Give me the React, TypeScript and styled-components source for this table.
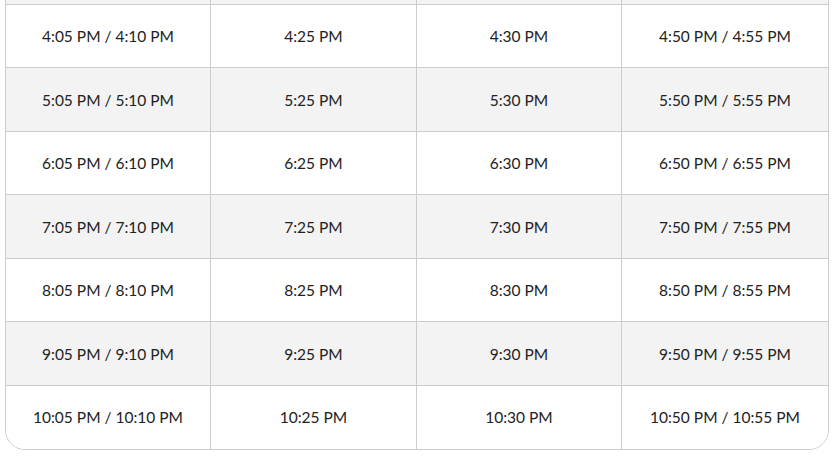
import React from "react";
import styled, { createGlobalStyle } from "styled-components";

const Global = createGlobalStyle`
  html, body { margin: 0; padding: 0; background: #ffffff; }
  body { font-family: "Source Sans Pro", Lato, "Liberation Sans", sans-serif; }
`;

const Page = styled.div`
  width: 838px;
  height: 461px;
  overflow: hidden;
  padding: 0 9px 0 5px;
  box-sizing: border-box;
`;

const Table = styled.div`
  margin-top: -59.43px;
  border: 1px solid #cccccc;
  border-radius: 20px;
  overflow: hidden;
  display: grid;
  grid-template-columns: 205px 206px 205px 1fr;
`;

const Cell = styled.div<{ $striped: boolean; $last: boolean; $lastRow: boolean }>`
  height: 63.43px;
  box-sizing: border-box;
  display: flex;
  align-items: center;
  justify-content: center;
  background: ${(p) => (p.$striped ? "#f3f3f3" : "#ffffff")};
  border-right: ${(p) => (p.$last ? "none" : "1px solid #cccccc")};
  border-bottom: ${(p) => (p.$lastRow ? "none" : "1px solid #cccccc")};
  color: #222222;
  font-size: 15.5px;
  padding-top: 0.5px;
`;

const hours = [3, 4, 5, 6, 7, 8, 9, 10];

export default function App() {
  return (
    <>
      <Global />
      <Page>
        <Table>
          {hours.map((h, i) => {
            const striped = i % 2 === 0;
            const lastRow = i === hours.length - 1;
            const hidden = i === 0;
            const cells = hidden
              ? ["", "", "", ""]
              : [
                  `${h}:05 PM / ${h}:10 PM`,
                  `${h}:25 PM`,
                  `${h}:30 PM`,
                  `${h}:50 PM / ${h}:55 PM`,
                ];
            return cells.map((c, j) => (
              <Cell key={`${h}-${j}`} $striped={striped} $last={j === 3} $lastRow={lastRow}>
                {c}
              </Cell>
            ));
          })}
        </Table>
      </Page>
    </>
  );
}
